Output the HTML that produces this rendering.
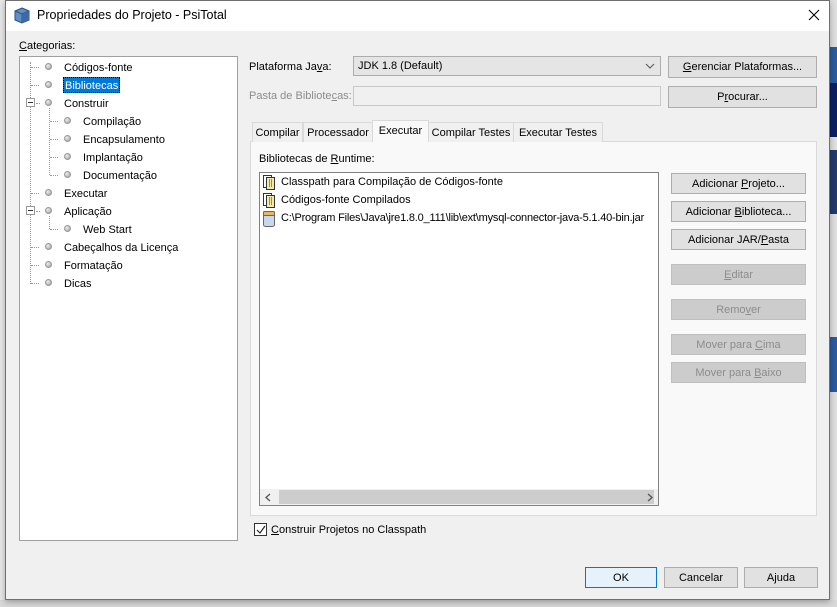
<!DOCTYPE html>
<html><head><meta charset="utf-8"><style>
*{box-sizing:border-box;margin:0;padding:0}
body{width:837px;height:607px;overflow:hidden;background:#e8e8e8;font-family:"Liberation Sans",sans-serif;font-size:11px;color:#000;position:relative}
.a{position:absolute}
.dlg{left:5px;top:0;width:825px;height:600px;background:#f0f0f0;border:1px solid #707070;box-shadow:0 2px 6px rgba(0,0,0,.3)}
.btn{position:absolute;background:#e1e1e1;border:1px solid #adadad;text-align:center;font-size:11px}
.dis{background:#cccccc;border-color:#bfbfbf;color:#8c8c8c}
.tab{position:absolute;top:122px;height:20px;border:1px solid #d9d9d9;border-bottom:none;background:#f0f0f0;padding-top:4px;text-align:center;white-space:nowrap}
.ti{position:absolute;height:16px;line-height:16px}
.dot{position:absolute;width:7px;height:7px;border-radius:50%;background:radial-gradient(circle at 35% 35%,#eee,#999);border:1px solid #999}
.dl{position:absolute;border-top:1px dotted #999;width:8px}
u{text-decoration:underline}
</style></head><body>
<div class="a" style="left:830px;top:0;width:7px;height:607px;background:#e0e0e0"></div>
<div class="a" style="left:830px;top:47px;width:7px;height:36px;background:#2a5aa0"></div>
<div class="a" style="left:830px;top:83px;width:7px;height:54px;background:#0c1f63"></div>
<div class="a" style="left:830px;top:150px;width:7px;height:64px;background:#243a6a"></div>
<div class="a" style="left:830px;top:337px;width:7px;height:55px;background:#2a5aa0"></div>
<div class="a" style="left:0;top:600px;width:837px;height:7px;background:#d8d8d8"></div>
<div class="a dlg"></div>
<div class="a" style="left:6px;top:1px;width:823px;height:30px;background:#fff"></div>
<svg class="a" style="left:14px;top:7px" width="16" height="17" viewBox="0 0 16 17"><path d="M8 1L15 4V13L8 16L1 13V4Z" fill="#5f8fc7" stroke="#2c4f80"/><path d="M1 4L8 7L15 4M8 7V16" stroke="#2c4f80" fill="none"/><path d="M8 7L15 4V13L8 16Z" fill="#3d6aa6"/></svg>
<div class="a" style="left:37px;top:8px;font-size:12.5px">Propriedades do Projeto - PsiTotal</div>
<svg class="a" style="left:808px;top:9px" width="12" height="12"><path d="M1 1L11 11M11 1L1 11" stroke="#000" stroke-width="1.1"/></svg>
<div class="a" style="left:19px;top:40px"><u>C</u>ategorias:</div>
<div class="a" style="left:19px;top:56px;width:219px;height:485px;background:#fff;border:1px solid #a0a0a0"></div>
<div class="a" style="left:30px;top:62px;height:222px;border-left:1px dotted #999"></div>
<div class="a" style="left:49px;top:108px;height:67px;border-left:1px dotted #999"></div>
<div class="a" style="left:49px;top:216px;height:13px;border-left:1px dotted #999"></div>
<div class="a" style="left:26px;top:98px;width:9px;height:9px;border:1px solid #999;background:#fff"></div><div class="a" style="left:28px;top:102px;width:5px;border-top:1px solid #333"></div>
<div class="a" style="left:26px;top:206px;width:9px;height:9px;border:1px solid #999;background:#fff"></div><div class="a" style="left:28px;top:210px;width:5px;border-top:1px solid #333"></div>
<div class="dl" style="left:31px;top:67px"></div><div class="dot" style="left:45px;top:63px"></div><div class="ti" style="left:64px;top:60px">Códigos-fonte</div>
<div class="dl" style="left:31px;top:85px"></div><div class="dot" style="left:45px;top:81px"></div><div class="ti" style="left:63px;top:77px;background:#0078d7;color:#fff;padding:0 1px;border:1px dotted #000">Bibliotecas</div>
<div class="dl" style="left:36px;top:103px;width:4px"></div><div class="dot" style="left:45px;top:99px"></div><div class="ti" style="left:64px;top:96px">Construir</div>
<div class="dl" style="left:50px;top:121px"></div><div class="dot" style="left:64px;top:117px"></div><div class="ti" style="left:83px;top:114px">Compilação</div>
<div class="dl" style="left:50px;top:139px"></div><div class="dot" style="left:64px;top:135px"></div><div class="ti" style="left:83px;top:132px">Encapsulamento</div>
<div class="dl" style="left:50px;top:157px"></div><div class="dot" style="left:64px;top:153px"></div><div class="ti" style="left:83px;top:150px">Implantação</div>
<div class="dl" style="left:50px;top:175px"></div><div class="dot" style="left:64px;top:171px"></div><div class="ti" style="left:83px;top:168px">Documentação</div>
<div class="dl" style="left:31px;top:193px"></div><div class="dot" style="left:45px;top:189px"></div><div class="ti" style="left:64px;top:186px">Executar</div>
<div class="dl" style="left:36px;top:211px;width:4px"></div><div class="dot" style="left:45px;top:207px"></div><div class="ti" style="left:64px;top:204px">Aplicação</div>
<div class="dl" style="left:50px;top:229px"></div><div class="dot" style="left:64px;top:225px"></div><div class="ti" style="left:83px;top:222px">Web Start</div>
<div class="dl" style="left:31px;top:247px"></div><div class="dot" style="left:45px;top:243px"></div><div class="ti" style="left:64px;top:240px">Cabeçalhos da Licença</div>
<div class="dl" style="left:31px;top:265px"></div><div class="dot" style="left:45px;top:261px"></div><div class="ti" style="left:64px;top:258px">Formatação</div>
<div class="dl" style="left:31px;top:283px"></div><div class="dot" style="left:45px;top:279px"></div><div class="ti" style="left:64px;top:276px">Dicas</div>
<div class="a" style="left:249px;top:61px">Plataforma Ja<u>v</u>a:</div>
<div class="a" style="left:353px;top:56px;width:308px;height:20px;border:1px solid #adadad;background:#e5e5e5;padding:3px 0 0 4px">JDK 1.8 (Default)</div>
<svg class="a" style="left:645px;top:63px" width="10" height="6"><path d="M1 1L5 5L9 1" stroke="#555" fill="none"/></svg>
<div class="btn" style="left:668px;top:56px;width:149px;height:22px;padding-top:4px"><u>G</u>erenciar Plataformas...</div>
<div class="a" style="left:249px;top:90px;color:#8c8c8c">Pasta de Bibliote<u>c</u>as:</div>
<div class="a" style="left:353px;top:86px;width:308px;height:20px;border:1px solid #c8c8c8;background:#f0f0f0"></div>
<div class="btn" style="left:668px;top:86px;width:149px;height:22px;padding-top:4px">P<u>r</u>ocurar...</div>
<div class="a" style="left:250px;top:141px;width:567px;height:375px;background:#f9f9f9;border:1px solid #d9d9d9"></div>
<div class="tab" style="left:252px;width:51px">Compilar</div>
<div class="tab" style="left:303px;width:70px">Processador</div>
<div class="tab" style="left:372px;top:120px;height:22px;width:57px;background:#f9f9f9;padding-top:4px">Executar</div>
<div class="tab" style="left:428px;width:86px">Compilar Testes</div>
<div class="tab" style="left:513px;width:90px">Executar Testes</div>
<div class="a" style="left:259px;top:153px">Bibliotecas de <u>R</u>untime:</div>
<div class="a" style="left:259px;top:172px;width:400px;height:334px;background:#fff;border:1px solid #828282;overflow:hidden">
<div class="a" style="left:21px;top:3px;white-space:nowrap">Classpath para Compilação de Códigos-fonte</div>
<div class="a" style="left:21px;top:21px;white-space:nowrap">Códigos-fonte Compilados</div>
<div class="a" style="left:21px;top:39px;white-space:nowrap;letter-spacing:-0.2px">C:\Program Files\Java\jre1.8.0_111\lib\ext\mysql-connector-java-5.1.40-bin.jar</div>
<svg class="a" style="left:3px;top:2px" width="13" height="15"><rect x="0.5" y="0.5" width="8" height="12" fill="#fff" stroke="#333"/><rect x="3.5" y="2.5" width="8" height="12" fill="#f5e9a8" stroke="#333"/><path d="M6 5h4M6 7h4M6 9h4M6 11h4" stroke="#333" stroke-dasharray="1 1"/></svg>
<svg class="a" style="left:3px;top:20px" width="13" height="15"><rect x="0.5" y="0.5" width="8" height="12" fill="#fff" stroke="#333"/><rect x="3.5" y="2.5" width="8" height="12" fill="#f5e9a8" stroke="#333"/><path d="M6 5h4M6 7h4M6 9h4M6 11h4" stroke="#333" stroke-dasharray="1 1"/></svg>
<svg class="a" style="left:3px;top:38px" width="12" height="16"><rect x="0.5" y="2.5" width="11" height="13" rx="2" fill="#c8d8ec" stroke="#666"/><rect x="0.5" y="0.5" width="11" height="4" rx="1" fill="#e8b860" stroke="#666"/></svg>
<div class="a" style="left:0;top:316px;width:398px;height:16px;background:#f0f0f0"></div>
<div class="a" style="left:19px;top:317px;width:375px;height:14px;background:#cdcdcd"></div>
<svg class="a" style="left:5px;top:320px" width="6" height="9"><path d="M5 1L1 4.5L5 8" stroke="#555" fill="none" stroke-width="1.3"/></svg>
<svg class="a" style="left:387px;top:320px" width="6" height="9"><path d="M1 1L5 4.5L1 8" stroke="#555" fill="none" stroke-width="1.3"/></svg>
</div>
<div class="btn" style="left:671px;top:173px;width:135px;height:21px;padding-top:4px">Adicionar <u>P</u>rojeto...</div>
<div class="btn" style="left:671px;top:201px;width:135px;height:21px;padding-top:4px">Adicionar <u>B</u>iblioteca...</div>
<div class="btn" style="left:671px;top:229px;width:135px;height:21px;padding-top:4px">Adicionar JAR/<u>P</u>asta</div>
<div class="btn dis" style="left:671px;top:264px;width:135px;height:21px;padding-top:4px"><u>E</u>ditar</div>
<div class="btn dis" style="left:671px;top:299px;width:135px;height:21px;padding-top:4px">Remo<u>v</u>er</div>
<div class="btn dis" style="left:671px;top:334px;width:135px;height:21px;padding-top:4px">Mover para <u>C</u>ima</div>
<div class="btn dis" style="left:671px;top:362px;width:135px;height:21px;padding-top:4px">Mover para <u>B</u>aixo</div>
<div class="a" style="left:254px;top:523px;width:13px;height:13px;border:1px solid #333;background:#fff"></div>
<svg class="a" style="left:256px;top:525px" width="10" height="10"><path d="M1 5L4 8L9 1" stroke="#222" fill="none" stroke-width="1.2"/></svg>
<div class="a" style="left:271px;top:524px"><u>C</u>onstruir Projetos no Classpath</div>
<div class="btn" style="left:585px;top:567px;width:72px;height:21px;padding-top:4px;background:#e5f1fb;border-color:#0078d7">OK</div>
<div class="btn" style="left:664px;top:567px;width:74px;height:21px;padding-top:4px">Cancelar</div>
<div class="btn" style="left:744px;top:567px;width:74px;height:21px;padding-top:4px">A<u>j</u>uda</div>
</body></html>
